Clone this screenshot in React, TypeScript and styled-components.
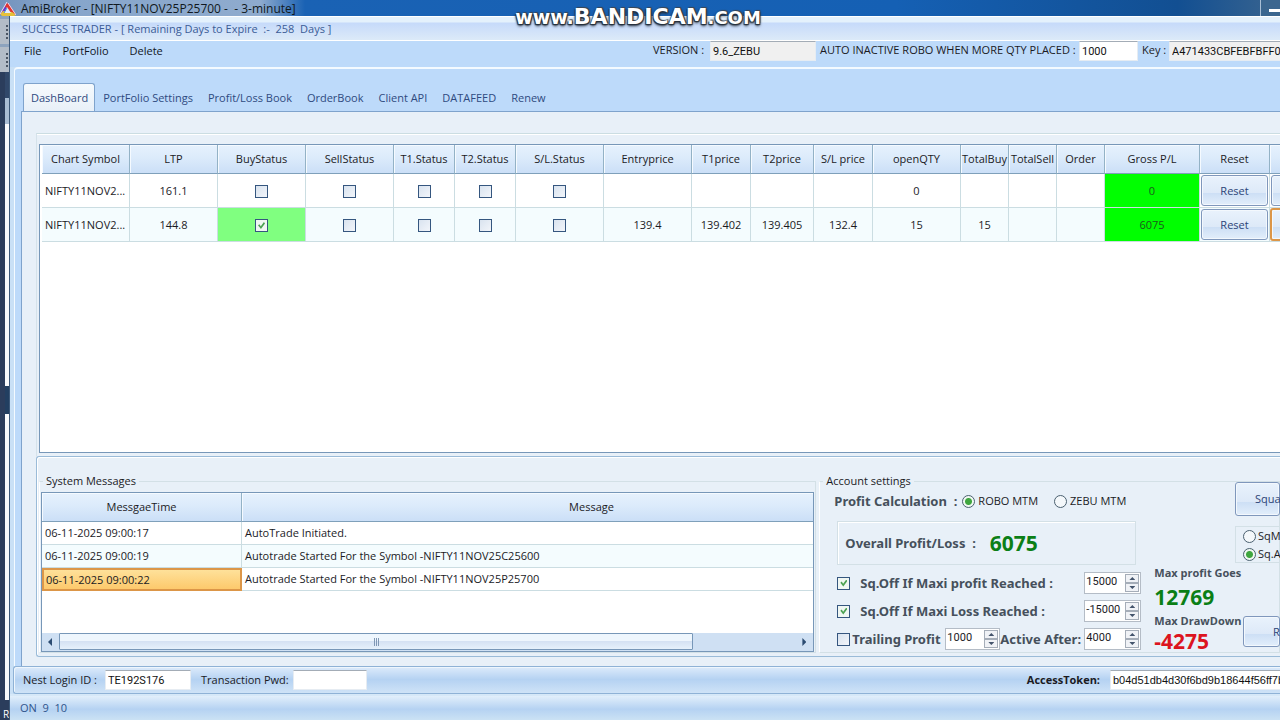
import React from 'react';
import styled, { createGlobalStyle, css } from 'styled-components';

const GlobalStyle = createGlobalStyle`
  *, *::before, *::after { box-sizing: border-box; }
  html, body { margin: 0; padding: 0; }
  body {
    font-family: 'Open Sans', 'Noto Sans', sans-serif;
    font-size: 11px;
    line-height: 16px;
    color: #1b1b1f;
    background: #bddafa;
  }
  button, input { font: inherit; color: inherit; margin: 0; }
`;

const fieldFont = css`
  font-family: Roboto, 'Liberation Sans', sans-serif;
  font-size: 11px;
  font-weight: 400;
  line-height: 16px;
`;

const Desktop = styled.div`
  position: relative;
  display: flex;
  flex-direction: column;
  min-height: 100vh;
  overflow: hidden;
`;

/* ---- outer application caption ---- */
const Caption = styled.header`
  display: flex;
  align-items: center;
  height: 16px;
  background: linear-gradient(90deg, #7393bd 0, #86a5cb 60px, #8fabce 260px, #1a62b4 305px, #1560b4 70%, #124f92 92%, #39648f 100%);
`;
const CaptionTitle = styled.span`
  flex: 1;
  padding: 2px 0 0 5px;
  font-size: 12px;
  line-height: 16px;
  color: #101820;
  white-space: pre;
`;
const MinimizeButton = styled.button`
  width: 20px;
  height: 16px;
  padding: 0 0 0 8px;
  border: 0;
  border-left: 1px solid #a9bfd6;
  background: #3b668f;
  &::after { content: ''; display: block; height: 3px; margin-top: 5px; background: #fff; }
`;
const Watermark = styled.div`
  position: absolute;
  top: 7px;
  left: 0;
  right: 0;
  text-align: center;
  padding-right: 4px;
  font-family: 'DejaVu Sans', sans-serif;
  font-weight: 700;
  font-size: 19px;
  line-height: 20px;
  color: #fff;
  text-shadow: 1px 1px 1px #26303c, -1px 1px 1px #26303c, 1px -1px 1px #3c4652, 0 2px 3px #26303c;
  pointer-events: none;
`;
const WatermarkName = styled.span`font-size: 22px;`;
const WatermarkEnd = styled.span`font-size: 18px;`;

/* ---- frame ---- */
const Workspace = styled.div`
  flex: 1;
  display: flex;
  min-width: 0;
`;
const EdgeStrip = styled.aside`
  flex: none;
  width: 10px;
  display: flex;
  flex-direction: column;
  background: #2b3d5c;
  border-right: 1px solid #3c5878;
  overflow: hidden;
  color: #fff;
  font-size: 10px;
  line-height: 12px;
`;
const ToolGrip = styled.div`
  height: 28px;
  background: #b3bcc7;
  border-top: 3px solid #8da3be;
  padding: 6px 0 0 6px;
  &::after {
    content: '';
    display: block;
    width: 2px;
    height: 14px;
    background: repeating-linear-gradient(#4b5563 0 2px, transparent 2px 4px);
  }
`;
const StripPane = styled.div<{ $h?: number; $tone?: string }>`
  flex: ${p => (p.$h ? `0 0 ${p.$h}px` : '1')};
  margin-left: 5px;
  background: ${p => p.$tone ?? '#f8fafc'};
`;
const StripText = styled.div`
  height: 20px;
  padding: 8px 0 0 3px;
`;
const Window = styled.main`
  flex: 1;
  min-width: 0;
  display: flex;
  flex-direction: column;
  background: #c9e0f6;
`;
const WindowTitle = styled.h1`
  margin: 0;
  height: 25px;
  padding: 4px 12px 0;
  border-top: 1px solid #fff;
  border-bottom: 1px solid #fff;
  background: linear-gradient(#e4f1fc 0 5px, #c6dafa 6px, #dceaf8 100%);
  font-size: 11px;
  line-height: 16px;
  font-weight: 400;
  color: #3b5c96;
  white-space: pre;
`;
const TopBar = styled.div`
  display: flex;
  align-items: flex-start;
  height: 26px;
  background: #bddafa;
`;
const Menu = styled.nav`
  display: flex;
  flex: 1;
  gap: 21px;
  padding: 2px 0 0 14px;
`;
const MenuButton = styled.button`
  border: 0;
  padding: 0;
  background: none;
  color: #10161f;
`;
const TopField = styled.label<{ $w: number }>`
  display: flex;
  flex: none;
  width: ${p => p.$w}px;
  justify-content: space-between;
  margin-left: 4px;
  line-height: 18px;
  white-space: nowrap;
`;
const TextBox = styled.input<{ $w: number; $tone?: string; $edge?: boolean; $sans?: boolean }>`
  ${fieldFont}
  ${p => p.$sans && css`font-family: 'Liberation Sans', sans-serif;`}
  width: ${p => p.$w}px;
  height: 20px;
  padding: 0 ${p => (p.$edge ? 0 : 2)}px 0 2px;
  border: 1px solid #e6ecf2;
  border-top-color: #a3acb6;
  border-right-width: ${p => (p.$edge ? 0 : 1)}px;
  border-radius: 0;
  background: ${p => p.$tone ?? '#fff'};
  color: #111;
  outline: 0;
`;

/* ---- tabs ---- */
const TabShell = styled.section`
  flex: 1;
  display: flex;
  flex-direction: column;
  min-width: 0;
  margin-left: 4px;
  padding-left: 6px;
  border-top: 2px solid #f4faff;
  border-left: 1px solid #f4faff;
  border-top-left-radius: 4px;
  background: #bddafa;
`;
const TabList = styled.div`
  display: flex;
  padding: 14px 0 0 2px;
`;
const Tab = styled.button<{ $active?: boolean }>`
  height: 28px;
  margin-bottom: ${p => (p.$active ? '-1px' : 0)};
  padding: 0 6px 0 7px;
  border: 1px solid ${p => (p.$active ? '#7fa3cc' : 'transparent')};
  border-bottom: 0;
  border-radius: 3px 3px 0 0;
  background: ${p => (p.$active ? 'linear-gradient(#f6fafd, #e8f0f8)' : 'none')};
  color: #2f4a80;
  white-space: nowrap;
`;
const TabPanel = styled.div`
  flex: 1;
  display: flex;
  flex-direction: column;
  min-width: 0;
  padding: 21px 0 9px 14px;
  border-top: 1px solid #7fa3cc;
  border-left: 1px solid #7fa3cc;
  background: #e8f0f8;
`;
const GridGroup = styled.div`
  flex: 1;
  display: flex;
  min-width: 0;
  padding: 10px 0 3px 2px;
  border-top: 1px solid #cbdde2;
  border-left: 1px solid #d5e2ea;
  box-shadow: inset 0 1px #fff;
`;
const GridFrame = styled.div`
  flex: 1;
  min-width: 0;
  min-height: 240px;
  overflow: hidden;
  padding-left: 2px;
  border: 1px solid #7797b8;
  border-right: 0;
  background: #fff;
`;

/* ---- data tables ---- */
const headFace = css`
  background: linear-gradient(#e6f1fd 0, #dcebfb 45%, #cbdff7 100%);
  box-shadow: inset 1px 1px #f5faff;
  font-weight: 400;
`;
const DataTable = styled.table<{ $w?: string }>`
  table-layout: fixed;
  width: ${p => p.$w ?? '100%'};
  border-collapse: separate;
  border-spacing: 0;
`;
const Head = styled.th`
  ${headFace}
  height: 29px;
  padding: 0;
  border-right: 1px solid #93b2c6;
  border-bottom: 1px solid #7fa0ba;
  white-space: nowrap;
  overflow: hidden;
`;
const Cell = styled.td<{ $tone?: string; $left?: boolean; $h?: number; $pad?: number }>`
  height: ${p => p.$h ?? 34}px;
  padding: 0 ${p => p.$pad ?? 3}px;
  border-right: 1px solid #cbdde2;
  border-bottom: 1px solid #cbdde2;
  background: ${p => p.$tone ?? 'transparent'};
  text-align: ${p => (p.$left ? 'left' : 'center')};
  white-space: nowrap;
  overflow: hidden;
`;
const Row = styled.tr<{ $alt?: boolean }>`
  background: ${p => (p.$alt ? '#f4fcfe' : '#fff')};
`;
const GrossValue = styled.span`color: #1c5a1c;`;
const SelectedCell = styled(Cell)`
  border: 2px solid #dc9648;
  padding: 0 2px;
  background: linear-gradient(#fee19a, #fdc96c);
`;
const FaceButton = styled.button<{ $h: number; $w?: string; $hot?: boolean; $indent?: number }>`
  display: block;
  width: ${p => p.$w ?? '100%'};
  height: ${p => p.$h}px;
  padding: 0 0 0 ${p => p.$indent ?? 0}px;
  text-align: ${p => (p.$indent ? 'left' : 'center')};
  border: ${p => (p.$hot ? '2px solid #dc9648' : '1px solid #7f97bc')};
  border-radius: 3px;
  background: linear-gradient(#e9f2fc 0, #dde9f8 58%, #cddff5 60%, #e2eefb 100%);
  box-shadow: inset 0 0 0 1px #f3f8fd;
  color: #2c4477;
`;

/* ---- ticks ---- */
const Tick = styled.input.attrs({ type: 'checkbox' })`
  appearance: none;
  flex: none;
  display: inline-block;
  vertical-align: middle;
  width: 13px;
  height: 13px;
  border: 1px solid #35567f;
  background: linear-gradient(135deg, #d9e3ef, #f2f5fa);
  &:checked { background: #f0f7f2; }
  &:checked::after {
    content: '';
    display: block;
    width: 7px;
    height: 7px;
    margin: 2px;
    background: #4ca252;
    clip-path: polygon(0 45%, 20% 30%, 40% 60%, 85% 0, 100% 20%, 42% 100%);
  }
`;
const Dial = styled.input.attrs({ type: 'radio' })`
  appearance: none;
  flex: none;
  width: 13px;
  height: 13px;
  border: 1px solid #4a6070;
  border-radius: 50%;
  background: #f4f8fb;
  &:checked { background: radial-gradient(circle, #3fa63f 0 3px, #f0f8f2 4px); }
`;
const DialLabel = styled.label`
  display: flex;
  align-items: center;
  gap: 3px;
  white-space: nowrap;
`;

/* ---- lower panel ---- */
const LowerPanel = styled.div`
  display: grid;
  grid-template-columns: minmax(0, 27fr) minmax(0, 16fr);
  gap: 3px;
  padding: 16px 0 3px 2px;
  border: 1px solid #9abbd8;
  border-right: 0;
  border-radius: 3px 0 0 3px;
  box-shadow: inset 1px 1px #fff;
`;
const Group = styled.fieldset`
  min-width: 0;
  height: 180px;
  margin: 0;
  padding: 3px 1px 0;
  border: 1px solid #d3e0e6;
  border-left-color: #fff;
`;
const Legend = styled.legend`
  margin-left: 2px;
  padding: 0 3px;
  height: 16px;
`;
const MessageFrame = styled.div`
  display: flex;
  flex-direction: column;
  height: 160px;
  border: 1px solid #7797b8;
  background: #fff;
`;
const MessageBody = styled.div`
  flex: 1;
  min-width: 0;
  overflow: hidden;
`;
const ScrollBar = styled.div`
  display: flex;
  height: 18px;
  background: #cfe0f3;
`;
const ScrollArrow = styled.button<{ $flip?: boolean }>`
  width: 17px;
  padding: 0 0 0 6px;
  border: 0;
  background: none;
  &::after {
    content: '';
    display: block;
    width: 4px;
    height: 8px;
    background: #2c4c72;
    clip-path: ${p => (p.$flip ? 'polygon(0 0, 100% 50%, 0 100%)' : 'polygon(100% 0, 0 50%, 100% 100%)')};
  }
`;
const ScrollTrack = styled.div`flex: 1;`;
const ScrollThumb = styled.div`
  display: flex;
  align-items: center;
  justify-content: center;
  width: 86%;
  height: 17px;
  border: 1px solid #7797b8;
  border-radius: 1px;
  background: linear-gradient(#eef6fd 0 45%, #d5e2f3 50%, #e6f1fb 100%);
  &::after {
    content: '';
    width: 5px;
    height: 8px;
    background: repeating-linear-gradient(90deg, #7f97b4 0 1px, transparent 1px 2px);
  }
`;
const Account = styled.div`
  display: flex;
  margin-right: -2px;
`;
const AccountMain = styled.div`
  flex: none;
  width: 320px;
  padding-left: 13px;
`;
const ModeRow = styled.div`
  display: flex;
  align-items: center;
  gap: 16px;
  height: 18px;
`;
const Strong = styled.span<{ $w?: number }>`
  font-family: 'Noto Sans', 'Open Sans', sans-serif;
  font-weight: 700;
  font-size: 13px;
  color: #46505c;
  white-space: pre;
  ${p => (p.$w ? `flex: none; width: ${p.$w}px;` : '')}
`;
const OverallBox = styled.div`
  display: flex;
  align-items: center;
  gap: 14px;
  width: 299px;
  height: 44px;
  margin: 11px 0 4px 3px;
  padding-left: 7px;
  border: 1px solid #d3e0e6;
  box-shadow: inset 1px 1px #fff;
`;
const Amount = styled.output<{ $loss?: boolean; }>`
  display: block;
  font-weight: 700;
  font-size: 21px;
  line-height: 24px;
  color: ${p => (p.$loss ? '#dc1420' : '#0b7f16')};
`;
const LimitRow = styled.div`
  display: flex;
  align-items: center;
  height: 28px;
  padding-left: 3px;
`;
const LimitLabel = styled.label<{ $gap: number }>`
  display: flex;
  align-items: center;
  gap: ${p => p.$gap}px;
  flex: 1;
  min-width: 0;
`;
const SpinFrame = styled.span<{ $w: number }>`
  display: flex;
  align-items: center;
  flex: none;
  width: ${p => p.$w}px;
  height: 22px;
  padding-right: 1px;
  border: 1px solid #b4bcc6;
  background: #fff;
`;
const SpinInput = styled.input`
  ${fieldFont}
  flex: 1;
  min-width: 0;
  width: 0;
  padding: 0 0 2px 1px;
  border: 0;
  background: none;
  outline: 0;
`;
const SpinButtons = styled.span`
  display: flex;
  flex-direction: column;
  width: 14px;
`;
const SpinButton = styled.button<{ $down?: boolean }>`
  display: flex;
  align-items: center;
  justify-content: center;
  height: 9px;
  padding: 0;
  border: 1px solid #a5adb8;
  background: #f0f2f6;
  &::after {
    content: '';
    width: 6px;
    height: 3px;
    background: #44546c;
    clip-path: ${p => (p.$down ? 'polygon(0 0, 100% 0, 50% 100%)' : 'polygon(50% 0, 100% 100%, 0 100%)')};
  }
`;
const AccountSide = styled.div`
  flex: 1;
  min-width: 0;
  display: flex;
  flex-direction: column;
`;
const SquareBlock = styled.div`
  width: 45px;
  margin: -10px 0 0 auto;
`;
const SquareModes = styled.div`
  margin-top: 10px;
  padding: 0 0 0 7px;
  height: 37px;
  border: 1px solid #d3e0e6;
  border-right: 0;
  & > label { height: 18px; gap: 2px; }
`;
const Stats = styled.div`
  display: flex;
  align-items: flex-end;
  padding: 2px 0 0 13px;
`;
const StatList = styled.div`
  flex: 1;
  min-width: 0;
`;
const StatName = styled.div<{ $above?: number; $below?: number }>`
  font-weight: 700;
  line-height: 16px;
  margin-top: ${p => p.$above ?? 0}px;
  margin-bottom: ${p => p.$below ?? 0}px;
  color: #46505c;
  white-space: nowrap;
`;
const ResetSlot = styled.div`padding-bottom: 6px;`;

/* ---- bottom bars ---- */
const LoginBar = styled.form`
  display: flex;
  align-items: center;
  height: 28px;
  margin-left: 3px;
  padding-left: 9px;
  border: 1px solid #8fb2d6;
  border-right: 0;
  border-radius: 3px 0 0 3px;
  background: linear-gradient(#ddebfb 0, #b5d2f2 48%, #cfe3f7 100%);
  box-shadow: inset 1px 1px #eef6fd;
`;
const LoginField = styled.label<{ $gap: number; $end?: boolean }>`
  display: flex;
  align-items: center;
  gap: ${p => p.$gap}px;
  margin-left: ${p => (p.$end ? 'auto' : '0')};
  margin-right: ${p => (p.$end ? '0' : '10px')};
  font-weight: ${p => (p.$end ? 700 : 400)};
  white-space: nowrap;
`;
const StatusBar = styled.footer`
  height: 26px;
  padding: 4px 10px;
  border-top: 2px solid #d6e8f8;
  background: linear-gradient(#e2effb 0, #b5d2f2 55%, #cbe2f4 100%);
  color: #30548c;
  white-space: pre;
`;

const columns: [string, number][] = [
  ['Chart Symbol', 88], ['LTP', 88], ['BuyStatus', 88], ['SellStatus', 88], ['T1.Status', 61],
  ['T2.Status', 61], ['S/L.Status', 88], ['Entryprice', 88], ['T1price', 59], ['T2price', 63],
  ['S/L price', 59], ['openQTY', 88], ['TotalBuy', 48], ['TotalSell', 48], ['Order', 48],
  ['Gross P/L', 95], ['Reset', 70], ['', 88],
];
const flags = ['Buy', 'Sell', 'T1', 'T2', 'Stop loss'];
const trades = [
  { symbol: 'NIFTY11NOV2...', ltp: '161.1', bought: false, values: ['', '', '', '', '0', '', '', ''], gross: '0' },
  { symbol: 'NIFTY11NOV2...', ltp: '144.8', bought: true, values: ['139.4', '139.402', '139.405', '132.4', '15', '15', '', ''], gross: '6075' },
];
const messages = [
  ['06-11-2025 09:00:17', 'AutoTrade Initiated.'],
  ['06-11-2025 09:00:19', 'Autotrade Started For the Symbol -NIFTY11NOV25C25600'],
  ['06-11-2025 09:00:22', 'Autotrade Started For the Symbol -NIFTY11NOV25P25700'],
];
const tabs = ['DashBoard', 'PortFolio Settings', 'Profit/Loss Book', 'OrderBook', 'Client API', 'DATAFEED', 'Renew'];

function Logo() {
  return (
    <svg width="16" height="16" viewBox="0 0 16 16" aria-hidden="true">
      <path d="M7 3 L0 14 L5 15 L9 8 Z" fill="#6a35c8" />
      <path d="M7 3 L9 4 L16 15 L11 15 L5 6 Z" fill="#e0342f" />
      <path d="M0 14 L3 11 L12 12 L16 15 L14 16 L2 16 Z" fill="#e6c13a" />
      <path d="M7 7 L11 13 L4 13 Z" fill="#e3ecfb" />
      <path d="M7 8 L4 13" stroke="#3f8fe0" strokeWidth="1" fill="none" />
      <path d="M7 2 L0 14 M8 3 L16 15" stroke="#f1d9ee" strokeWidth="1" fill="none" />
    </svg>
  );
}

function Spin({ label, value, width = 57 }: { label: string; value: string; width?: number }) {
  return (
    <SpinFrame $w={width}>
      <SpinInput aria-label={label} defaultValue={value} />
      <SpinButtons>
        <SpinButton type="button" aria-label={`${label} up`} />
        <SpinButton type="button" $down aria-label={`${label} down`} />
      </SpinButtons>
    </SpinFrame>
  );
}

function TradeGrid() {
  const total = columns.reduce((sum, c) => sum + c[1], 0);
  return (
    <GridFrame>
      <DataTable $w={`${total}px`}>
        <colgroup>{columns.map(([name, w]) => <col key={name} width={w} />)}</colgroup>
        <thead><tr>{columns.map(([name]) => <Head key={name}>{name}</Head>)}</tr></thead>
        <tbody>
          {trades.map((t, i) => (
            <Row key={t.ltp} $alt={i === 1}>
              <Cell $left>{t.symbol}</Cell>
              <Cell>{t.ltp}</Cell>
              {flags.map((f, n) => (
                <Cell key={f} $tone={n === 0 && t.bought ? '#80ff80' : undefined}>
                  <Tick aria-label={`${f} status`} defaultChecked={n === 0 && t.bought} />
                </Cell>
              ))}
              {t.values.map((v, n) => <Cell key={n}>{v}</Cell>)}
              <Cell $tone="#00ff00"><GrossValue>{t.gross}</GrossValue></Cell>
              <Cell $pad={1}><FaceButton $h={31}>Reset</FaceButton></Cell>
              <Cell $pad={i === 1 ? 0 : 1}><FaceButton $h={i === 1 ? 33 : 31} $hot={i === 1} aria-label="Row action" /></Cell>
            </Row>
          ))}
        </tbody>
      </DataTable>
    </GridFrame>
  );
}

function Messages() {
  return (
    <Group>
      <Legend>System Messages</Legend>
      <MessageFrame>
        <MessageBody>
          <DataTable $w="900px">
            <colgroup><col width="200" /><col width="700" /></colgroup>
            <thead><tr><Head>MessgaeTime</Head><Head>Message</Head></tr></thead>
            <tbody>
              {messages.map(([time, text], i) => (
                <Row key={time} $alt={i === 1}>
                  {i === 2 ? <SelectedCell $left $h={23}>{time}</SelectedCell> : <Cell $left $h={23}>{time}</Cell>}
                  <Cell $left $h={23}>{text}</Cell>
                </Row>
              ))}
            </tbody>
          </DataTable>
        </MessageBody>
        <ScrollBar>
          <ScrollArrow aria-label="Scroll left" />
          <ScrollTrack><ScrollThumb /></ScrollTrack>
          <ScrollArrow $flip aria-label="Scroll right" />
        </ScrollBar>
      </MessageFrame>
    </Group>
  );
}

function AccountSettings() {
  return (
    <Group>
      <Legend>Account settings</Legend>
      <Account>
        <AccountMain>
          <ModeRow>
            <Strong $w={112}>{'Profit Calculation  :'}</Strong>
            <DialLabel><Dial name="mtm" defaultChecked />ROBO MTM</DialLabel>
            <DialLabel><Dial name="mtm" />ZEBU MTM</DialLabel>
          </ModeRow>
          <OverallBox>
            <Strong>{'Overall Profit/Loss  :'}</Strong>
            <Amount>6075</Amount>
          </OverallBox>
          <LimitRow>
            <LimitLabel $gap={10}><Tick defaultChecked /><Strong>Sq.Off If Maxi profit Reached :</Strong></LimitLabel>
            <Spin label="Maximum profit" value="15000" />
          </LimitRow>
          <LimitRow>
            <LimitLabel $gap={10}><Tick defaultChecked /><Strong>Sq.Off If Maxi Loss Reached :</Strong></LimitLabel>
            <Spin label="Maximum loss" value="-15000" />
          </LimitRow>
          <LimitRow>
            <LimitLabel $gap={2}><Tick /><Strong>Trailing Profit</Strong></LimitLabel>
            <Spin label="Trailing profit" value="1000" width={55} />
            <Strong $w={84}>Active After:</Strong>
            <Spin label="Active after" value="4000" />
          </LimitRow>
        </AccountMain>
        <AccountSide>
          <SquareBlock>
            <FaceButton $h={34} $indent={19}>Squa</FaceButton>
            <SquareModes>
              <DialLabel><Dial name="square" />SqM</DialLabel>
              <DialLabel><Dial name="square" defaultChecked />Sq.A</DialLabel>
            </SquareModes>
          </SquareBlock>
          <Stats>
            <StatList>
              <StatName $below={4}>Max profit Goes</StatName>
              <Amount>12769</Amount>
              <StatName $above={4}>Max DrawDown</StatName>
              <Amount $loss>-4275</Amount>
            </StatList>
            <ResetSlot><FaceButton $h={31} $w="37px" $indent={29}>R</FaceButton></ResetSlot>
          </Stats>
        </AccountSide>
      </Account>
    </Group>
  );
}

export default function App() {
  return (
    <>
      <GlobalStyle />
      <Desktop>
        <Caption>
          <Logo />
          <CaptionTitle>{'AmiBroker - [NIFTY11NOV25P25700 -  - 3-minute]'}</CaptionTitle>
          <MinimizeButton aria-label="Minimize" />
        </Caption>
        <Workspace>
          <EdgeStrip>
            <ToolGrip />
            <ToolGrip />
            <StripPane $h={26} $tone="#31486a" />
            <StripPane $h={26} $tone="#a9bdd3" />
            <StripPane $h={262} />
            <StripPane $h={28} $tone="#223f61" />
            <StripPane />
            <StripText>R</StripText>
          </EdgeStrip>
          <Window>
            <WindowTitle>{'SUCCESS TRADER - [ Remaining Days to Expire  :-  258  Days ]'}</WindowTitle>
            <TopBar>
              <Menu>
                <MenuButton>File</MenuButton>
                <MenuButton>PortFolio</MenuButton>
                <MenuButton>Delete</MenuButton>
              </Menu>
              <TopField $w={163}>VERSION :<TextBox $w={106} $tone="#f0f0f0" readOnly defaultValue="9.6_ZEBU" /></TopField>
              <TopField $w={318}>AUTO INACTIVE ROBO WHEN MORE QTY PLACED :<TextBox $w={59} defaultValue="1000" /></TopField>
              <TopField $w={138}>Key :<TextBox $w={111} $tone="#f0f0f0" $edge readOnly defaultValue="A471433CBFEBFBFF0" /></TopField>
            </TopBar>
            <TabShell>
              <TabList role="tablist">
                {tabs.map((t, i) => <Tab key={t} role="tab" aria-selected={i === 0} $active={i === 0}>{t}</Tab>)}
              </TabList>
              <TabPanel role="tabpanel">
                <GridGroup><TradeGrid /></GridGroup>
                <LowerPanel>
                  <Messages />
                  <AccountSettings />
                </LowerPanel>
              </TabPanel>
            </TabShell>
            <LoginBar>
              <LoginField $gap={8}>Nest Login ID :<TextBox $w={86} defaultValue="TE192S176" /></LoginField>
              <LoginField $gap={4}>Transaction Pwd:<TextBox $w={74} type="password" /></LoginField>
              <LoginField $gap={10} $end>AccessToken:<TextBox $w={170} $edge $sans defaultValue="b04d51db4d30f6bd9b18644f56ff7b" /></LoginField>
            </LoginBar>
            <StatusBar>{'ON  9  10'}</StatusBar>
          </Window>
        </Workspace>
        <Watermark>www.<WatermarkName>BANDICAM</WatermarkName><WatermarkEnd>.COM</WatermarkEnd></Watermark>
      </Desktop>
    </>
  );
}
